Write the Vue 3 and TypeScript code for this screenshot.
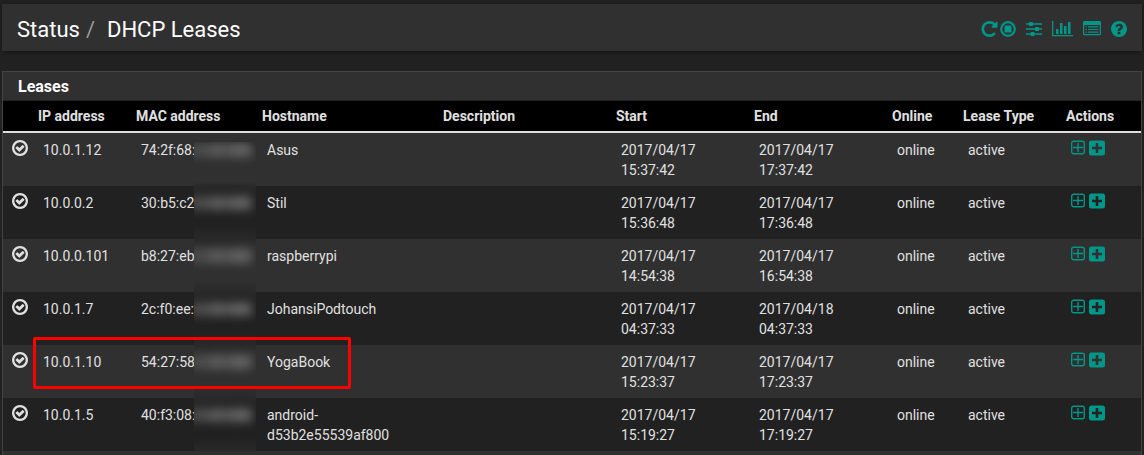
<script setup lang="ts">
interface Lease {
  ip: string
  mac: string
  host: string
  start: string
  end: string
  marked?: boolean
}

const leases: Lease[] = [
  { ip: '10.0.1.12', mac: '74:2f:68:', host: 'Asus', start: '2017/04/17 15:37:42', end: '2017/04/17 17:37:42' },
  { ip: '10.0.0.2', mac: '30:b5:c2', host: 'Stil', start: '2017/04/17 15:36:48', end: '2017/04/17 17:36:48' },
  { ip: '10.0.0.101', mac: 'b8:27:eb', host: 'raspberrypi', start: '2017/04/17 14:54:38', end: '2017/04/17 16:54:38' },
  { ip: '10.0.1.7', mac: '2c:f0:ee:', host: 'JohansiPodtouch', start: '2017/04/17 04:37:33', end: '2017/04/18 04:37:33' },
  { ip: '10.0.1.10', mac: '54:27:58', host: 'YogaBook', start: '2017/04/17 15:23:37', end: '2017/04/17 17:23:37', marked: true },
  { ip: '10.0.1.5', mac: '40:f3:08:', host: 'android-d53b2e55539af800', start: '2017/04/17 15:19:27', end: '2017/04/17 17:19:27' },
]
</script>

<template>
  <div class="page">
    <header class="topbar">
      <h1 class="crumbs">
        <a href="#">Status</a><span class="slash">/</span><a href="#">DHCP Leases</a>
      </h1>
      <nav class="tools">
        <div class="pair">
          <a href="#" aria-label="Restart service">
            <svg width="17" height="16" viewBox="128 128 1536 1536"><path d="M1664 256v448q0 26-19 45t-45 19h-448q-42 0-59-40-17-39 14-69l138-138q-148-137-349-137-104 0-198.500 40.500t-163.500 109.500-109.500 163.500-40.500 198.500 40.500 198.500 109.500 163.500 163.500 109.500 198.500 40.500q119 0 225-52t179-147q7-10 23-12 15 0 25 9l137 138q9 8 9.500 20.500t-7.500 22.500q-109 132-264 204.500t-327 72.500q-156 0-298-61t-245-164-164-245-61-298 61-298 164-245 245-164 298-61q147 0 284.500 55.500t244.500 156.500l130-129q29-31 70-14 39 17 39 59z" /></svg>
          </a>
          <a href="#" aria-label="Stop service">
            <svg width="16" height="16" viewBox="0 0 16 16"><circle cx="8" cy="8" r="6.800" fill="none" stroke="currentColor" stroke-width="2.200" /><rect x="4.500" y="4.500" width="7" height="7" rx=".5" /></svg>
          </a>
        </div>
        <a href="#" aria-label="Settings">
          <svg width="16" height="16" viewBox="0 0 16 16"><path d="M0 2.200h3v-.4q0-.8.8-.8h2.400q.8 0 .8.800v.4h9v1.600H7v.4q0 .8-.8.800H3.800q-.8 0-.8-.8v-.4H0zM0 7.200h9v-.4q0-.8.8-.8h2.400q.8 0 .8.800v.4h3v1.600h-3v.4q0 .8-.8.800H9.800q-.8 0-.8-.8v-.4H0zM0 12.200h4.500v-.4q0-.8.8-.8h2.400q.8 0 .8.800v.4H16v1.600H8.500v.4q0 .8-.8.800H5.300q-.8 0-.8-.8v-.4H0z" /></svg>
        </a>
        <a href="#" aria-label="Monitoring">
          <svg width="21" height="16" viewBox="0 0 21 16"><path d="M0 0h1.300v14H21v1.300H0zM4 8h2.500v5H4zM8 2h2.500v11H8zM12 5h2.500v8H12zM16 1h2.500v12H16z" /></svg>
        </a>
        <a href="#" aria-label="Logs">
          <svg width="18" height="16" viewBox="0 0 18 16"><path fill-rule="evenodd" d="M1.500 0h15Q18 0 18 1.500v11.300q0 1.500-1.500 1.500h-15Q0 14.300 0 12.800V1.500Q0 0 1.500 0zM1.200 4v8.500q0 .5.500.5h14.600q.5 0 .5-.5V4zM2.500 5.200h1.300v1.200H2.500zM5 5.200h10.500v1.200H5zM2.500 7.900h1.300v1.200H2.500zM5 7.900h10.500v1.200H5zM2.500 10.500h1.300v1.200H2.500zM5 10.500h10.500v1.200H5z" /></svg>
        </a>
        <a href="#" aria-label="Help">
          <svg width="16" height="16" viewBox="128 128 1536 1536"><path d="M1024 1376v-192q0-14-9-23t-23-9h-192q-14 0-23 9t-9 23v192q0 14 9 23t23 9h192q14 0 23-9t9-23zm256-672q0-88-55.500-163t-138.500-116-170-41q-243 0-371 213-15 24 8 42l132 100q7 6 19 6 16 0 25-12 53-68 86-92 34-24 86-24 48 0 85.500 26t37.500 59q0 38-20 61t-68 45q-63 28-115.500 86.500t-52.500 125.500v36q0 14 9 23t23 9h192q14 0 23-9t9-23q0-19 21.500-49.500t54.500-49.500q32-18 49-28.500t46-35 44.500-48 28-60.500 12.500-81zm384 192q0 209-103 385.500t-279.500 279.500-385.500 103-385.500-103-279.500-279.500-103-385.500 103-385.500 279.500-279.500 385.500-103 385.500 103 279.500 279.500 103 385.500z" /></svg>
        </a>
      </nav>
    </header>

    <section class="panel">
      <h2 class="panel-title">Leases</h2>
      <table>
        <colgroup>
          <col class="c-icon" /><col class="c-ip" /><col class="c-mac" /><col class="c-host" /><col />
          <col class="c-date" /><col class="c-date" /><col class="c-online" /><col class="c-type" /><col class="c-actions" />
        </colgroup>
        <thead>
          <tr>
            <th></th>
            <th>IP address</th>
            <th>MAC address</th>
            <th>Hostname</th>
            <th>Description</th>
            <th>Start</th>
            <th>End</th>
            <th>Online</th>
            <th>Lease Type</th>
            <th>Actions</th>
          </tr>
        </thead>
        <tbody>
          <tr v-for="lease in leases" :key="lease.ip">
            <td class="state">
              <svg width="16" height="16" viewBox="128 128 1536 1536"><path d="M1299 813l-422 422q-19 19-45 19t-45-19l-294-294q-19-19-19-45t19-45l102-102q19-19 45-19t45 19l147 147 275-275q19-19 45-19t45 19l102 102q19 19 19 45t-19 45zm141 83q0-148-73-273t-198-198-273-73-273 73-198 198-73 273 73 273 198 198 273 73 273-73 198-198 73-273zm224 0q0 209-103 385.500t-279.500 279.500-385.500 103-385.500-103-279.500-279.500-103-385.500 103-385.500 279.500-279.500 385.500-103 385.500 103 279.500 279.500 103 385.500z" /></svg>
            </td>
            <td class="ip">{{ lease.ip }}<span v-if="lease.marked" class="marker"></span></td>
            <td class="mac">{{ lease.mac }}<span class="mask"></span></td>
            <td>{{ lease.host }}</td>
            <td></td>
            <td>{{ lease.start }}</td>
            <td>{{ lease.end }}</td>
            <td>online</td>
            <td>active</td>
            <td class="tasks">
              <div class="actions">
                <a href="#" aria-label="Add static mapping">
                  <svg width="14" height="16" viewBox="0 0 14 16"><rect x=".7" y="1.200" width="12.600" height="12.600" rx="2" fill="none" stroke="currentColor" stroke-width="1.400" /><path d="M6.300 3h1.400v3.800H12v1.400H7.700V12H6.300V8.200H2V6.800h4.300z" /></svg>
                </a>
                <a href="#" aria-label="Add WOL mapping">
                  <svg width="16" height="16" viewBox="0 0 16 16"><path fill-rule="evenodd" d="M2.500.5h11q2.500 0 2.500 2.500v10q0 2.500-2.500 2.500h-11Q0 15.500 0 13V3Q0 .5 2.500.5zM6.700 3v3.700H3v2.600h3.700V13h2.600V9.300H13V6.700H9.300V3z" /></svg>
                </a>
              </div>
            </td>
          </tr>
        </tbody>
      </table>
    </section>
  </div>
</template>

<style>
body {
  background: #212121;
}
</style>

<style scoped>
.page {
  box-sizing: border-box;
  display: flex;
  flex-direction: column;
  gap: 20px;
  min-height: 100vh;
  padding: 4px 2px 0;
  color: #e0e0e0;
  font-family: Roboto, "Liberation Sans", sans-serif;
  font-size: 14px;
  line-height: 20px;
}

a {
  color: inherit;
  text-decoration: none;
}

svg {
  display: block;
  fill: currentColor;
}

.topbar {
  display: flex;
  align-items: center;
  justify-content: space-between;
  height: 47px;
  padding: 0 15px;
  background: #303030;
  box-shadow: 0 1px 4px rgba(0, 0, 0, 0.4);
}

.crumbs {
  display: flex;
  margin: 0;
  padding-top: 4px;
  color: #fff;
  font-size: 22px;
  font-weight: 400;
  line-height: 24px;
}

.slash {
  padding: 0 12px 0 6px;
  color: #999;
}

.tools {
  display: flex;
  gap: 10px;
  padding-top: 2px;
  color: #009688;
}

.pair {
  display: flex;
  gap: 2px;
}

.panel {
  flex: 1;
  border: 1px solid #444;
  border-bottom: 0;
  background: #303030;
}

.panel-title {
  margin: 0;
  padding: 5px 15px 3px;
  border-bottom: 1px solid #222;
  color: #fff;
  font-size: 16px;
  font-weight: 700;
  line-height: 20px;
}

table {
  width: 100%;
  table-layout: fixed;
  border-collapse: separate;
  border-spacing: 0;
}

.c-icon { width: 30px; }
.c-ip { width: 98px; }
.c-mac { width: 126px; }
.c-host { width: 181px; }
.c-date { width: 138px; }
.c-online { width: 71px; }
.c-type { width: 103px; }
.c-actions { width: 80px; }

th {
  padding: 5px;
  border-bottom: 2px solid #ddd;
  background: #000;
  font-weight: 700;
  text-align: left;
}

td {
  padding: 7px 10px 6px;
  background: #303030;
  vertical-align: top;
}

tbody tr:nth-child(even) td {
  background: #212121;
}

td.state {
  padding-left: 9px;
  padding-right: 5px;
}

.ip,
.mac {
  position: relative;
}

.marker {
  position: absolute;
  z-index: 2;
  top: -8px;
  left: 0;
  box-sizing: border-box;
  width: 318px;
  height: 52px;
  border: 3px solid #f00;
  border-radius: 2px;
}

.mask {
  position: absolute;
  top: 0;
  bottom: 0;
  left: 63px;
  width: 62px;
  overflow: hidden;
  background: linear-gradient(#292929, #303030 10px, #303030 40px, #292929);
}

tr:nth-child(even) .mask {
  background: linear-gradient(#292929, #212121 10px, #212121 40px, #292929);
}

tr:first-child .mask {
  top: 9px;
}

.mask::before {
  content: "";
  position: absolute;
  top: 10px;
  left: -4px;
  width: 62px;
  height: 14px;
  background: linear-gradient(90deg, #4c4c4c, #4c4c4c 25%, #606060 45%, #505050 58%, #646464 75%, #5c5c5c);
  filter: blur(5px);
}

tr:first-child .mask::before {
  top: 1px;
}

td.tasks {
  padding-right: 5px;
}

.actions {
  display: flex;
  gap: 4px;
  color: #009688;
}
</style>
